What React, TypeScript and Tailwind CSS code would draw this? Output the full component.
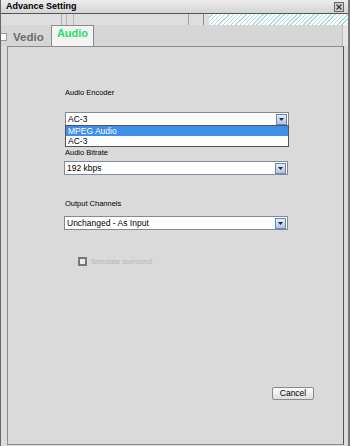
import React from "react";

const font = { fontFamily: '"Liberation Sans", Arial, sans-serif' };

function Combo({ value, open }: { value: string; open?: boolean }) {
  return (
    <div className="relative w-[224px]">
      <div className="flex h-[14px] items-center justify-between border border-[#7f8a99] bg-white pl-[2px] pr-[1px]">
        <span className="text-[8.5px] leading-none text-black">{value}</span>
        <div className="flex h-[11px] w-[11px] items-center justify-center border border-[#6f87b0] bg-gradient-to-b from-[#e2ebf8] to-[#b3c6e6]">
          <svg width="5" height="3" viewBox="0 0 5 3">
            <path d="M0 0h5L2.5 3z" fill="#1c2a44" />
          </svg>
        </div>
      </div>
      {open && (
        <div className="absolute left-0 top-[13px] z-10 w-[224px] border border-[#555] bg-white">
          <div className="flex h-[10px] items-center bg-[#3f8ee8] pl-[2px] text-[8.5px] leading-none text-white">MPEG Audio</div>
          <div className="flex h-[10px] items-center pl-[2px] text-[8.5px] leading-none text-black">AC-3</div>
        </div>
      )}
    </div>
  );
}

export default function App() {
  return (
    <div style={font} className="relative flex h-[446px] w-[350px] flex-col overflow-hidden border-l border-r-2 border-l-[#666] border-r-[#777] bg-[#dcdcdc]">
      {/* title bar */}
      <div className="flex h-[14px] items-center justify-between border-b border-[#555] bg-gradient-to-b from-[#ececec] to-[#d4d4d4] pl-[5px] pr-[4px]">
        <span className="text-[9px] font-bold leading-none text-black">Advance Setting</span>
        <div className="flex h-[10px] w-[10px] items-center justify-center border border-[#666] bg-[#d0d0d0]">
          <svg width="6" height="6" viewBox="0 0 6 6">
            <path d="M0.5 0.5l5 5M5.5 0.5l-5 5" stroke="#333" strokeWidth="1.2" />
          </svg>
        </div>
      </div>

      {/* strip */}
      <div className="flex h-[11px] bg-[#dedede]">
        <div className="w-[61px] border-r border-[#b0b0b0]" />
        <div className="w-[5px] border-r border-[#b8b8b8]" />
        <div className="w-[7px] border-r border-[#b8b8b8]" />
        <div className="w-[115px] border-r border-[#a0a0a0]" />
        <div className="w-[15px] border-r border-[#888]" />
        <div className="w-[5px]" />
        <div className="flex-1 bg-[repeating-linear-gradient(135deg,#ffffff_0px,#ffffff_2px,#a9dcdc_2px,#a9dcdc_3px)]" />
      </div>

      {/* tabs */}
      <div className="flex h-[21px] bg-[#d6d6d6]">
        <div className="relative flex w-[50px] items-end pb-[3px] pl-[12px]">
          <div className="absolute left-0 top-[8px] h-[8px] w-[6px] border border-l-0 border-[#999] bg-white" />
          <span className="text-[11.5px] font-bold leading-none text-[#6a6a6a]">Vedio</span>
        </div>
        <div className="flex w-[43px] items-start justify-center border border-b-0 border-[#8a8a8a] bg-[#f4f4f4] pt-[2px]">
          <span className="text-[11px] font-bold leading-none text-[#22e06a]">Audio</span>
        </div>
        <div className="flex-1 border-r border-[#bbb]" />
        <div className="w-[5px] bg-[#e6e6e6]" />
      </div>

      {/* panel */}
      <div className="relative mb-[1px] ml-[6px] mr-[4px] flex flex-1 flex-col border border-[#8c8c8c] border-r-[#555] bg-[#dadada]">
        <div className="ml-[57px] mt-[41px] flex flex-col">
          <span className="h-[10px] text-[7.5px] leading-[10px] text-black">Audio Encoder</span>
          <div className="mt-[14px]">
            <Combo value="AC-3" open />
          </div>
          <span className="mt-[22px] h-[10px] text-[7.5px] leading-[10px] text-black">Audio Bitrate</span>
          <div className="ml-[-1px] mt-[3px]">
            <Combo value="192 kbps" />
          </div>
          <span className="mt-[24px] h-[10px] text-[7.5px] leading-[10px] text-black">Output Channels</span>
          <div className="ml-[-1px] mt-[7px]">
            <Combo value="Unchanged - As Input" />
          </div>
          <div className="ml-[13px] mt-[27px] flex items-center gap-[4px]">
            <div className="h-[9px] w-[9px] border-2 border-[#777] bg-[#ececec]" />
            <span className="text-[7.5px] leading-none text-[#b4b4b4]">Simulate surround</span>
          </div>
        </div>

        <div className="mt-[121px] flex justify-end pr-[29px]">
          <button className="flex h-[13px] w-[42px] items-center justify-center rounded-[2px] border border-[#8a8a8a] bg-gradient-to-b from-[#fbfbfb] to-[#dedede] text-[8.5px] leading-none text-black">
            Cancel
          </button>
        </div>
      </div>
    </div>
  );
}
